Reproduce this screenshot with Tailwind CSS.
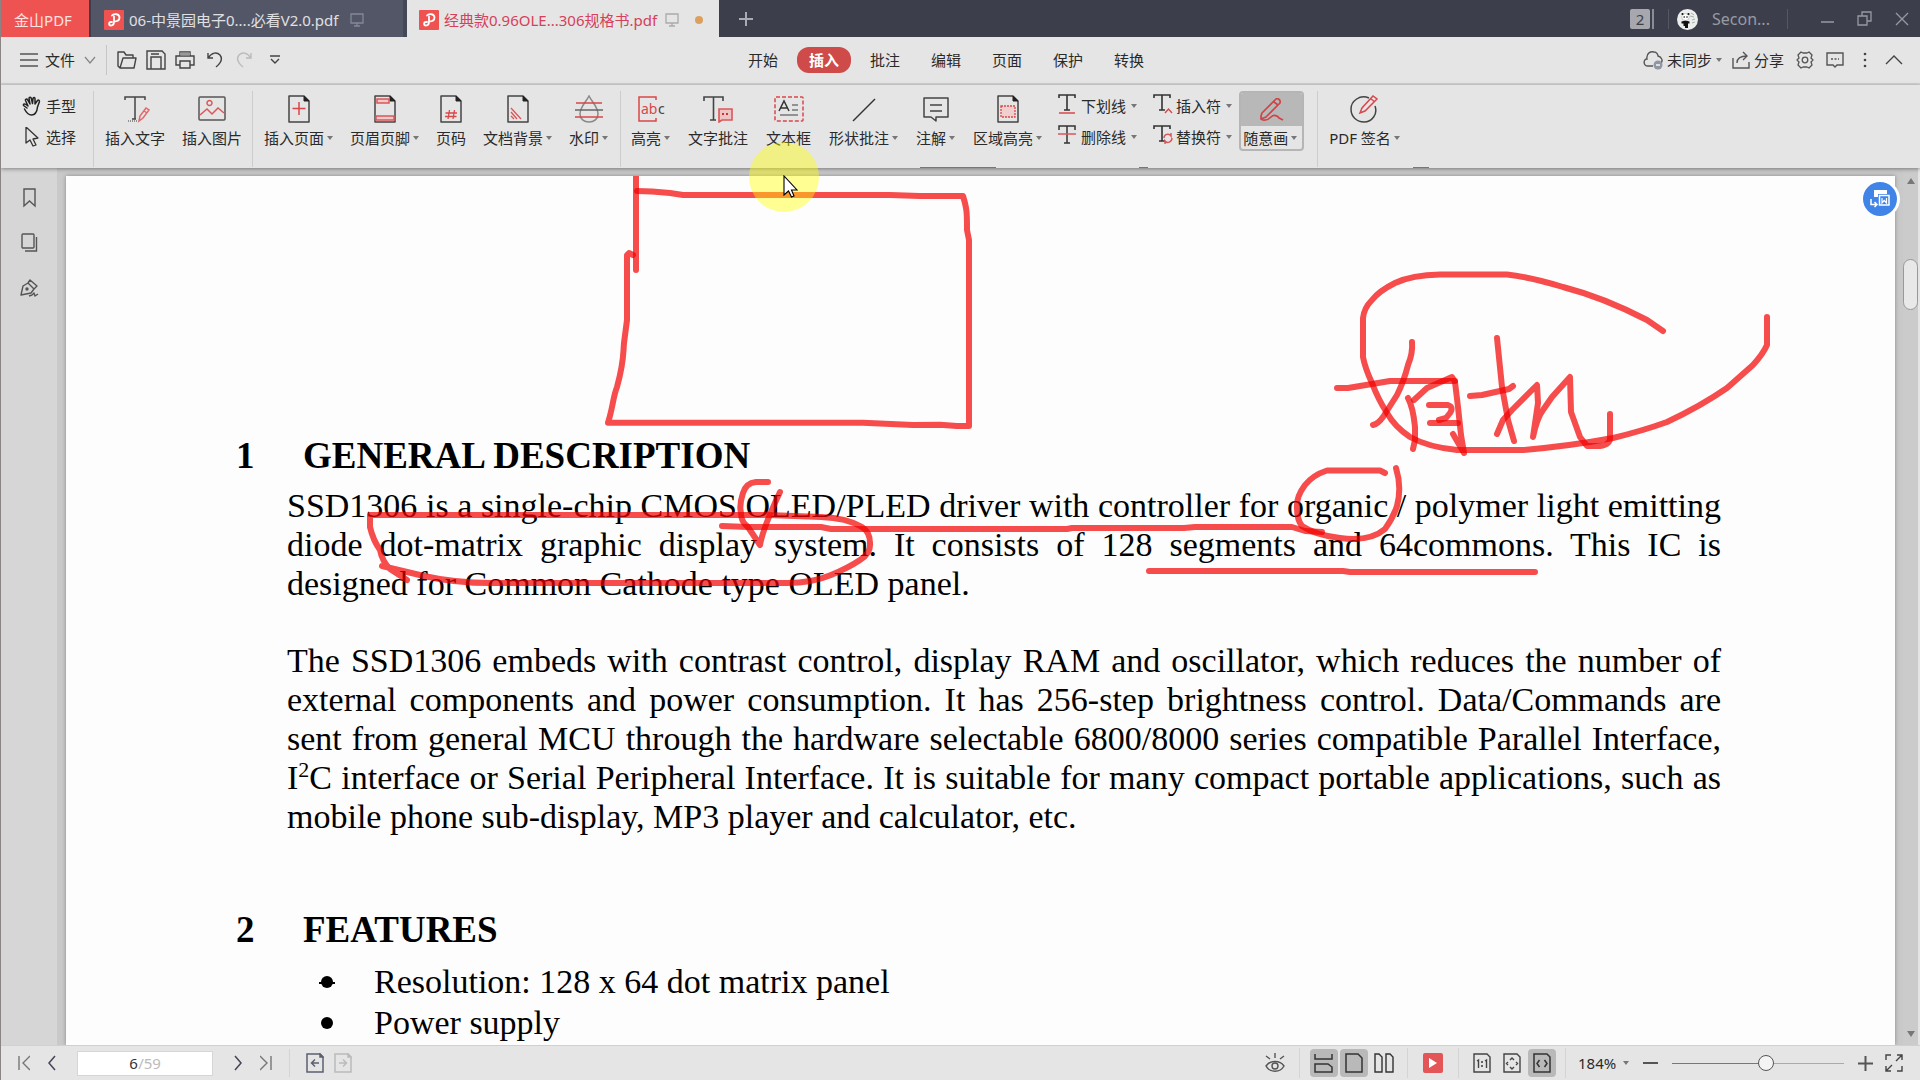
<!DOCTYPE html>
<html lang="zh-CN">
<head>
<meta charset="utf-8">
<title>金山PDF</title>
<script src="https://cdn.jsdelivr.net/npm/@tailwindcss/browser@4"></script>
</head>
<body class="font-['Noto_Sans','Noto_Sans_CJK_SC',sans-serif] text-[15px] leading-5 text-[#2a2a2a]">
<svg class="hidden" aria-hidden="true">
  <symbol id="page" viewBox="0 0 24 28"><path d="M2 1H17L22 6V27H2Z" fill="none" stroke="#444" stroke-width="1.5" stroke-linejoin="round"/><path d="M17 1V6H22Z" fill="#222" stroke="#222"/></symbol>
  <symbol id="tee" viewBox="0 0 20 20"><path d="M1 4V1H17V4M9 1V16M6 16H12" fill="none" stroke="#333" stroke-width="1.6"/></symbol>
  <symbol id="caret" viewBox="0 0 6 4"><path d="M0 0H6L3 4Z" fill="#777"/></symbol>
  <symbol id="pdf" viewBox="0 0 20 20"><rect width="20" height="20" rx="1" fill="#ef5351"/><path d="M8 5.500C10 3 15.500 4 15.500 7.500C15.500 11 12 11.500 10 11.500V6.500M10 11.500C10 13.500 9 15.500 7 15.500C4.500 15.500 4.500 12 7 12H8" fill="none" stroke="#fff" stroke-width="1.800" stroke-linecap="round"/></symbol>
  <symbol id="monitor" viewBox="0 0 14 14"><path d="M1 1H13V10H1ZM7 10V13M4 13H10" fill="none" stroke="currentColor" stroke-width="1.300"/></symbol>
</svg>

<div class="relative flex h-screen flex-col overflow-hidden border-l border-[#8a8584] bg-[#e5e5e5]">

  <!-- window tabs -->
  <header class="flex h-[37px] shrink-0 bg-[#3c3f4b]">
    <button class="w-[88px] bg-[#ef5351] pr-1 pt-0.5 text-[#ffe3e0]">金山PDF</button>
    <button class="ml-0.5 flex w-[316px] items-center border-r-4 border-[#444755] bg-[#525666] pl-[13px] pt-0.5 text-[#e0e0e2]">
      <svg class="h-5 w-5"><use href="#pdf"/></svg><span class="ml-[5px] w-[221px] whitespace-nowrap text-left">06-中景园电子0....必看V2.0.pdf</span>
      <svg class="h-3.5 w-3.5 text-[#858895]"><use href="#monitor"/></svg>
    </button>
    <button class="flex w-[312px] items-center bg-[#e5e5e5] pl-3 pt-0.5 text-[#d5405a]">
      <svg class="h-5 w-5"><use href="#pdf"/></svg><span class="ml-[5px] w-[221px] whitespace-nowrap text-left">经典款0.96OLE...306规格书.pdf</span>
      <svg class="h-3.5 w-3.5 text-[#aaa]"><use href="#monitor"/></svg>
      <span class="ml-4 h-2 w-2 rounded-full bg-[#dba060]"></span>
    </button>
    <button class="w-[54px] pl-5" aria-label="新建标签"><svg class="h-3.5 w-3.5" viewBox="0 0 14 14"><path d="M7 0V14M0 7H14" stroke="#a9abb3" stroke-width="2"/></svg></button>
    <div class="ml-auto flex items-center text-[#989aa3]">
      <button class="flex gap-0.5" aria-label="窗口数"><span class="h-5 w-5 rounded-xs bg-[#a6a8ae] text-center text-[#3c3f4b]">2</span><span class="w-0.5 bg-[#8b8d96]"></span></button>
      <span class="ml-3.5 h-5 w-px bg-[#555863]"></span>
      <svg class="ml-2 mt-0.5 h-[21px] w-[21px]" viewBox="0 0 21 21"><circle cx="10.500" cy="10.500" r="10.500" fill="#eceeec"/><ellipse cx="8.500" cy="8" rx="3.800" ry="3.500" fill="#fff" stroke="#999" stroke-width=".5"/><circle cx="5.500" cy="5" r="1.100" fill="#111"/><circle cx="11.500" cy="5" r="1.100" fill="#111"/><circle cx="7.200" cy="8" r=".8" fill="#111"/><circle cx="10" cy="8" r=".8" fill="#111"/><path d="M4.500 12.500C7 11.500 10 11.500 12.500 12.500V14.500H11V19H8V17H6.500V14.500H4.500Z" fill="#111"/><path d="M14 4l3 2M13 7l4 1M15 11l3-1M15 14l3-1" stroke="#a4b0ac" stroke-width="1"/></svg>
      <span class="ml-3.5 w-[64px] text-base">Secon...</span>
      <span class="ml-[11px] h-5 w-px bg-[#555863]"></span>
      <button class="ml-[33px]" aria-label="最小化"><svg class="h-4 w-[13px]" viewBox="0 0 13 16"><path d="M0 11H13" stroke="currentColor" stroke-width="1.500"/></svg></button>
      <button class="ml-[23px]" aria-label="还原"><svg class="h-4 w-4" viewBox="0 0 16 16"><path d="M1 5H10V14H1ZM5 5V1H14V10H10" fill="none" stroke="currentColor" stroke-width="1.300"/></svg></button>
      <button class="ml-[22px] mr-[11px]" aria-label="关闭"><svg class="h-3.5 w-3.5" viewBox="0 0 14 14"><path d="M1 1L13 13M13 1L1 13" stroke="currentColor" stroke-width="1.300"/></svg></button>
    </div>
  </header>

  <!-- menu row -->
  <nav class="flex h-[48px] shrink-0 items-center border-b-2 border-[#d3d3d3]">
    <div class="flex w-[735px] shrink-0 items-center pl-[19px]">
      <button class="flex items-center gap-[7px]"><svg class="h-4 w-[18px]" viewBox="0 0 18 16"><path d="M0 2H18M0 8H18M0 14H18" stroke="#555" stroke-width="1.400"/></svg>文件<svg class="ml-0.5 h-2 w-3" viewBox="0 0 12 8"><path d="M1 1L6 7L11 1" fill="none" stroke="#888" stroke-width="1.300"/></svg></button>
      <span class="ml-2.5 h-[30px] w-px bg-[#c6c6c6]"></span>
      <div class="ml-2.5 flex items-center gap-[9px]">
        <button aria-label="打开"><svg class="h-5 w-5" viewBox="0 0 20 20" fill="none" stroke="#444" stroke-width="1.400" stroke-linejoin="round"><path d="M3 18L1 16V2H7L9 5H16V8M3 18L6 8H19L17 18Z"/></svg></button>
        <button aria-label="保存"><svg class="h-5 w-5" viewBox="0 0 20 20" fill="none" stroke="#444" stroke-width="1.400"><path d="M1 1H16L19 4V19H1ZM5 19V7H15V19M5 4H13"/></svg></button>
        <button aria-label="打印"><svg class="h-5 w-5" viewBox="0 0 20 20" fill="none" stroke="#444" stroke-width="1.400"><path d="M5 6V2H15V6M5 15H1V6H19V15H15M5 11H15V18H5Z"/><path d="M5 4H15" stroke="#999" stroke-width="3"/></svg></button>
        <button class="ml-[3px]" aria-label="撤销"><svg class="h-5 w-4" viewBox="0 0 16 20" fill="none" stroke="#444" stroke-width="1.400"><path d="M1 3V8H6M1 8C5 2 10 2 13 5C16 9 14 13 9 17"/></svg></button>
        <button class="ml-1" aria-label="重做"><svg class="h-5 w-4" viewBox="0 0 16 20" fill="none" stroke="#bbb" stroke-width="1.400"><path d="M15 3V8H10M15 8C11 2 6 2 3 5C0 9 2 13 7 17"/></svg></button>
        <button class="ml-2" aria-label="更多"><svg class="h-2.5 w-3" viewBox="0 0 12 10" fill="none" stroke="#444" stroke-width="1.400"><path d="M1 1H11M2 4L6 8L10 4"/></svg></button>
      </div>
    </div>
    <div class="flex gap-[7px]">
      <button class="h-[26px] w-[54px]">开始</button>
      <button class="h-[26px] w-[54px] rounded-xl bg-[#cf4b49] font-bold text-white">插入</button>
      <button class="h-[26px] w-[54px]">批注</button>
      <button class="h-[26px] w-[54px]">编辑</button>
      <button class="h-[26px] w-[54px]">页面</button>
      <button class="h-[26px] w-[54px]">保护</button>
      <button class="h-[26px] w-[54px]">转换</button>
    </div>
    <div class="ml-auto mr-[17px] flex items-center">
      <button class="flex items-center gap-1"><svg class="h-5 w-5" viewBox="0 0 20 20" fill="none" stroke="#555" stroke-width="1.400"><path d="M10 16H5C0 16 0 9 4 9C3 3 8 1 11 2C14 2 15 5 15 6C19 7 20 11 18 13"/><circle cx="15" cy="15" r="4.500" fill="#9096a3" stroke="none"/><path d="M13 15H17" stroke="#fff"/></svg>未同步<svg class="h-1 w-1.5"><use href="#caret"/></svg></button>
      <button class="ml-2.5 flex items-center gap-1"><svg class="h-5 w-[18px]" viewBox="0 0 18 20" fill="none" stroke="#555" stroke-width="1.400"><path d="M1 8V18H17V12M5 13C5 8 8 6 15 6M11 2L15 6L11 10"/></svg>分享</button>
      <button class="ml-3" aria-label="设置"><svg class="h-5 w-[18px]" viewBox="0 0 18 20" fill="none" stroke="#555" stroke-width="1.300" stroke-linejoin="round"><path d="M5 2L7 3H11L13 2L16 5L15 8L17 10L15 12L16 15L13 18L11 17H7L5 18L2 15L3 12L1 10L3 8L2 5Z"/><circle cx="9" cy="10" r="2.800"/></svg></button>
      <button class="ml-3" aria-label="反馈"><svg class="h-[18px] w-[18px]" viewBox="0 0 18 18" fill="none" stroke="#555" stroke-width="1.400"><path d="M1 2H17V14H11L9 16L7 14H1Z"/><path d="M5 8H13" stroke-dasharray="2 1.500"/></svg></button>
      <button class="ml-[19px]" aria-label="更多"><svg class="h-4 w-1" viewBox="0 0 4 16" fill="#444"><circle cx="2" cy="2" r="1.300"/><circle cx="2" cy="8" r="1.300"/><circle cx="2" cy="14" r="1.300"/></svg></button>
      <button class="ml-[18px]" aria-label="收起"><svg class="h-2.5 w-[18px]" viewBox="0 0 18 10"><path d="M1 9L9 1L17 9" fill="none" stroke="#444" stroke-width="1.400"/></svg></button>
    </div>
  </nav>

  <!-- ribbon -->
  <section class="relative z-10 flex h-[83px] shrink-0 bg-[#e5e5e5] pt-1.5 leading-5 shadow-[0_1px_4px_#0006]">
    <div class="flex w-[92px] flex-col gap-[11px] pl-[21px] pt-[5px]">
      <button class="flex items-center gap-1"><svg class="h-5 w-5" viewBox="0 0 20 20" fill="none" stroke="#222" stroke-width="1.500" stroke-linecap="round" stroke-linejoin="round"><path d="M5 12L1.500 9.500C1 8 2.500 7.500 4 8.500L6 10L3.500 4.500C3 3 5 2.500 5.700 4L8 8L7 2.500C7 1 9 .8 9.300 2.300L10.500 7.500L11 2.500C11.300 1 13.200 1.200 13 3L13 8L15.500 4.500C16.500 3.500 18 4.500 17.300 6L15.500 11C15 16 13 19 9.500 19C6 19 4 16 2.500 13"/></svg>手型</button>
      <button class="flex items-center gap-1"><svg class="h-5 w-5" viewBox="0 0 20 20" fill="none" stroke="#333" stroke-width="1.300" stroke-linejoin="round"><path d="M4 0V16L8 13L11 19L14 18L11 12L16 11Z"/></svg>选择</button>
    </div>
    <span class="h-[76px] w-px bg-[#cdcdcd]"></span>

    <div class="flex w-[158px] items-start gap-[17px] pl-[11px] pt-1">
      <button class="flex flex-col items-center gap-[5px]"><svg class="h-7 w-8" viewBox="0 0 32 28" fill="none" stroke="#444" stroke-width="1.500"><path d="M6 5V2H26V5M16 2V24M13 24H17"/><path d="M9 26H19" stroke-dasharray="1 1" stroke="#777"/><path d="M20 26L21 21L27 13L30 15L24 23ZM25 16L28 18" stroke="#e2686a"/></svg>插入文字</button>
      <button class="flex flex-col items-center gap-[5px]"><svg class="h-7 w-7" viewBox="0 0 28 28" fill="none" stroke="#555" stroke-width="1.500"><rect x="1" y="2" width="26" height="23" rx="1"/><path d="M2 20L9 14L14 19L20 13L26 18M14 8A2.500 2.500 0 1 1 9 8A2.500 2.500 0 1 1 14 8" stroke="#d9575a"/></svg>插入图片</button>
    </div>
    <span class="h-[76px] w-px bg-[#cdcdcd]"></span>

    <div class="flex w-[367px] items-start gap-[17px] pl-[11px] pt-1">
      <button class="flex flex-col items-center gap-[5px]"><svg class="h-7 w-6" viewBox="0 0 24 28"><use href="#page"/><path d="M12 7V20M5.500 13.500H18.500" stroke="#d9474a" stroke-width="1.500"/></svg><span class="flex items-center gap-[3px]">插入页面<svg class="h-1 w-1.5"><use href="#caret"/></svg></span></button>
      <button class="flex flex-col items-center gap-[5px]"><svg class="h-7 w-6" viewBox="0 0 24 28"><use href="#page"/><path d="M4 4H16V8H4ZM3 21H21V25H3Z" stroke="#d9575a" fill="#f0c9c9" stroke-width="1.500"/></svg><span class="flex items-center gap-[3px]">页眉页脚<svg class="h-1 w-1.5"><use href="#caret"/></svg></span></button>
      <button class="flex flex-col items-center gap-[5px]"><svg class="h-7 w-6" viewBox="0 0 24 28"><use href="#page"/><path d="M10.500 15L9 24M15.500 15L14 24M6.500 18H18M6 21.500H17.500" stroke="#d9474a" stroke-width="1.300"/></svg>页码</button>
      <button class="flex flex-col items-center gap-[5px]"><svg class="h-7 w-6" viewBox="0 0 24 28"><use href="#page"/><path d="M5 13L15 24M5 17L11 24M5 21L8 24" stroke="#d9575a" stroke-width="1.300"/></svg><span class="flex items-center gap-[3px]">文档背景<svg class="h-1 w-1.5"><use href="#caret"/></svg></span></button>
      <button class="flex flex-col items-center gap-[5px]"><svg class="h-7 w-7" viewBox="0 0 28 28" fill="none" stroke-width="1.500"><path d="M14 1C11 7 5 12 5 19C5 24 9 27 14 27C19 27 23 24 23 19C23 12 17 7 14 1Z" stroke="#888"/><path d="M1 8H27M0 22H28" stroke="#d9474a"/><path d="M0 15H28" stroke="#666"/></svg><span class="flex items-center gap-[3px]">水印<svg class="h-1 w-1.5"><use href="#caret"/></svg></span></button>
    </div>
    <span class="h-[76px] w-px bg-[#cdcdcd]"></span>

    <div class="flex items-start gap-[18px] pl-2.5 pt-1">
      <button class="flex flex-col items-center gap-[5px]"><svg class="h-7 w-7" viewBox="0 0 28 28"><path d="M19 5V2H2V26H19V23" fill="none" stroke="#d9474a" stroke-width="1.500"/><text x="4" y="19" font-size="14" fill="#d9474a">ab</text><text x="21" y="19" font-size="14" fill="#444">c</text></svg><span class="flex items-center gap-[3px]">高亮<svg class="h-1 w-1.5"><use href="#caret"/></svg></span></button>
      <button class="flex flex-col items-center gap-[5px]"><svg class="h-7 w-8" viewBox="0 0 32 28" fill="none" stroke="#444" stroke-width="1.600"><path d="M2 6V2H21V6M11.500 2V25M8 25H14"/><path d="M17 14H30V25H20L17 27Z" fill="#efc4c4" stroke="#d9575a"/><path d="M20 19H22M24 19H26" stroke="#c33" stroke-width="2"/></svg>文字批注</button>
      <button class="flex flex-col items-center gap-[5px]"><svg class="h-7 w-[30px]" viewBox="0 0 30 28" fill="none"><rect x="1" y="2" width="28" height="24" rx="1" stroke="#d9474a" stroke-width="1.500" stroke-dasharray="4 2"/><path d="M5 16L10 6L15 16M7 13H13" stroke="#333" stroke-width="1.500"/><path d="M18 10H24M18 15H24M6 20H24" stroke="#777" stroke-width="1.400"/></svg>文本框</button>
      <button class="flex flex-col items-center gap-[5px]"><svg class="h-7 w-7" viewBox="0 0 28 28"><path d="M3 26L25 4" stroke="#333" stroke-width="1.500"/></svg><span class="flex items-center gap-[3px]">形状批注<svg class="h-1 w-1.5"><use href="#caret"/></svg></span></button>
      <button class="flex flex-col items-center gap-[5px]"><svg class="h-7 w-7" viewBox="0 0 28 28" fill="none" stroke="#444" stroke-width="1.500" stroke-linejoin="round"><path d="M2 3H26V22H14V26L9 22H2ZM8 10H20M8 16H20"/></svg><span class="flex items-center gap-[3px]">注解<svg class="h-1 w-1.5"><use href="#caret"/></svg></span></button>
      <button class="flex flex-col items-center gap-[5px]"><svg class="h-7 w-6" viewBox="0 0 24 28"><use href="#page"/><rect x="5" y="11" width="14" height="11" fill="#f0cfcf" stroke="#d9474a" stroke-width="1.300" stroke-dasharray="2 1"/></svg><span class="flex items-center gap-[3px]">区域高亮<svg class="h-1 w-1.5"><use href="#caret"/></svg></span></button>
    </div>

    <div class="ml-4 grid grid-cols-2 content-start gap-x-4 gap-y-[11px] pt-[5px]">
      <button class="flex items-center gap-[5px]"><svg class="-mt-1 h-5 w-[18px]" viewBox="0 0 18 20"><use href="#tee" width="20" height="20"/><path d="M1 19H17" stroke="#d9474a" stroke-width="1.500"/></svg>下划线<svg class="h-1 w-1.5"><use href="#caret"/></svg></button>
      <button class="flex items-center gap-[5px]"><svg class="-mt-1 h-5 w-[18px]" viewBox="0 0 18 20" overflow="visible"><use href="#tee" width="20" height="20"/><path d="M12 19L15.500 15L19 19" fill="none" stroke="#d9474a" stroke-width="1.400"/></svg>插入符<svg class="h-1 w-1.5"><use href="#caret"/></svg></button>
      <button class="flex items-center gap-[5px]"><svg class="-mt-1 h-5 w-[18px]" viewBox="0 0 18 20" fill="none" stroke="#333" stroke-width="1.500"><path d="M1 5V1H17V5M9 1V18M6 18H12"/><path d="M0 9H18" stroke="#d9575a"/></svg>删除线<svg class="h-1 w-1.5"><use href="#caret"/></svg></button>
      <button class="flex items-center gap-[5px]"><svg class="-mt-1 h-5 w-[18px]" viewBox="0 0 18 20" overflow="visible"><use href="#tee" width="20" height="20"/><path d="M11 13C11 9 16 8 18 11V8M19 13C19 17 14 19 12 16V19" fill="none" stroke="#d9575a" stroke-width="1.500"/></svg>替换符<svg class="h-1 w-1.5"><use href="#caret"/></svg></button>
    </div>

    <button class="ml-[7px] flex h-[60px] w-[65px] flex-col overflow-hidden rounded-sm border-2 border-[#b5b5b5] bg-[#e5e5e5]">
      <span class="flex h-[33px] w-full shrink-0 items-center justify-center bg-[#b8b8b8]"><svg class="h-6 w-6" viewBox="0 0 24 24" fill="none" stroke="#cf4547" stroke-width="1.700" stroke-linejoin="round"><path d="M1 18L2 15L16 1C18 0 21 2 20 5L6 19L1 21ZM14 4L18 7M1 21C4 23 8 22 11 19C14 16 18 18 19 20L23 22"/></svg></span>
      <span class="flex h-[23px] items-center gap-[3px] pl-0.5">随意画<svg class="h-1 w-1.5"><use href="#caret"/></svg></span>
    </button>
    <span class="ml-[13px] h-[76px] w-px bg-[#cdcdcd]"></span>
    <button class="ml-[11px] flex flex-col items-center gap-[5px] self-start pt-1"><svg class="h-7 w-7" viewBox="0 0 28 28" fill="none" stroke-width="1.500"><path d="M19 3C10 -1 1 6 1 14C1 22 7 27 14 27C22 27 28 19 25 11" stroke="#444"/><path d="M10 18L12 13L23 1L27 4L15 16ZM21 4L25 7" stroke="#d9474a"/></svg><span class="flex items-center gap-[3px]">PDF 签名<svg class="h-1 w-1.5"><use href="#caret"/></svg></span></button>

    <span class="absolute bottom-0 left-[919px] h-px w-[76px] bg-[#777]"></span>
    <span class="absolute bottom-0 left-[1138px] h-px w-[9px] bg-[#777]"></span>
    <span class="absolute bottom-0 left-[1412px] h-px w-4 bg-[#777]"></span>
  </section>

  <!-- workspace -->
  <main class="relative flex min-h-0 flex-1 border-r-2 border-[#e5e5e5] bg-[#c9c9c9]">
    <aside class="flex w-[56px] shrink-0 flex-col items-center gap-[25px] bg-[#d6d6d6] pt-5">
      <button aria-label="书签"><svg class="h-5 w-5" viewBox="0 0 20 20" fill="none" stroke="#555" stroke-width="1.400"><path d="M5 1H16V18L10.500 13L5 18Z"/></svg></button>
      <button aria-label="缩略图"><svg class="h-5 w-5" viewBox="0 0 20 20" fill="none" stroke="#555" stroke-width="1.400"><rect x="3" y="1" width="12" height="14" rx="1"/><path d="M17.500 4V18H6"/></svg></button>
      <button aria-label="签名"><svg class="h-5 w-5" viewBox="0 0 20 20" fill="none" stroke="#555" stroke-width="1.400" stroke-linejoin="round"><path d="M2 17L4 8L9 5L15 11L12 15ZM9 5L11 2L18 8L15 11M10 18L13 17L15 15L16 18L19 16"/><circle cx="8" cy="11" r="1" fill="#555"/></svg></button>
    </aside>

    <div class="relative ml-[9px] mt-2 min-w-0 flex-1 overflow-hidden bg-[#fdfdfd] shadow-[0_0_4px_#0005]">
      <article class="pl-[170px] pr-[174px] pt-[258px] font-['Liberation_Serif',serif] text-[34px] leading-[39px] text-black">
        <h2 class="flex text-[37px] font-bold leading-[44px]"><span class="w-[67px]">1</span>GENERAL DESCRIPTION</h2>
        <div class="ml-[51px] mt-2 whitespace-nowrap">
          <p class="[text-align-last:justify]">SSD1306 is a single-chip CMOS OLED/PLED driver with controller for organic / polymer light emitting</p>
          <p class="[text-align-last:justify]">diode dot-matrix graphic display system. It consists of 128 segments and 64commons. This IC is</p>
          <p>designed for Common Cathode type OLED panel.</p>
        </div>
        <div class="ml-[51px] mt-[38px] whitespace-nowrap">
          <p class="[text-align-last:justify]">The SSD1306 embeds with contrast control, display RAM and oscillator, which reduces the number of</p>
          <p class="[text-align-last:justify]">external components and power consumption. It has 256-step brightness control. Data/Commands are</p>
          <p class="[text-align-last:justify]">sent from general MCU through the hardware selectable 6800/8000 series compatible Parallel Interface,</p>
          <p class="[text-align-last:justify]">I<sup class="-top-3 text-[22px]">2</sup>C interface or Serial Peripheral Interface. It is suitable for many compact portable applications, such as</p>
          <p>mobile phone sub-display, MP3 player and calculator, etc.</p>
        </div>
        <h2 class="mt-[72px] flex text-[37px] font-bold leading-[44px]"><span class="w-[67px]">2</span>FEATURES</h2>
        <ul class="ml-[83px] mt-[9px] leading-[41px]">
          <li class="flex items-center"><svg class="mr-[39px] h-3.5 w-4" viewBox="0 0 16 14"><circle cx="8" cy="7" r="6"/><path d="M0 8H16" stroke="#000" stroke-width="2"/></svg>Resolution: 128 x 64 dot matrix panel</li>
          <li class="flex items-center"><svg class="mr-[39px] h-3.5 w-4" viewBox="0 0 16 14"><circle cx="8" cy="7" r="6"/></svg>Power supply</li>
        </ul>
      </article>

      <!-- freehand ink layer -->
      <svg class="absolute left-0 top-0 h-[869px] w-[1829px]" viewBox="66 176 1829 869" fill="none" stroke="#f20000" stroke-width="6" stroke-linecap="round" stroke-linejoin="round">
        <path opacity=".7" d="M636 170V270"/>
        <path opacity=".7" d="M637 191L652 191.500L670 193L683 195H890L920 196H963C967 209 967 213 967 230L969 240V426H957L940 424.700L913 425L863 422.700H608C613 407 613 397 617 387C624 362 623 355 624 343L627 320V255L629 253L633 255"/>
        <path opacity=".7" d="M1663 331L1647 320C1620 306 1590 294 1563 287Q1530 277 1507 274.500H1440Q1412 275 1395 283Q1379 291 1372 300Q1364 308 1363 318V357Q1365 368 1372 383Q1378 399 1387 413Q1395 427 1410 437Q1428 447 1457 450H1523Q1570 446 1613 438Q1642 431 1667 422Q1701 406 1727 388L1753 365Q1763 354 1767 345V317"/>
        <path opacity=".7" d="M1337 388H1348L1390 381H1455"/>
        <path opacity=".7" d="M1412 342Q1413 353 1408 365Q1404 381 1397 395L1383 417Q1378 424 1373 425"/>
        <path opacity=".7" d="M1408 398Q1413 407 1415 427V440L1413 449"/>
        <path opacity=".7" d="M1414 400L1427 388L1452 377L1455 382L1458 407L1461 435L1464 453L1453 434"/>
        <path opacity=".7" d="M1429 405H1448Q1454 407 1450 413L1446 418L1439 420"/>
        <path opacity=".7" d="M1430 423H1458"/>
        <path opacity=".7" d="M1470 396L1482 395L1509 389L1513 386"/>
        <path opacity=".7" d="M1497 338L1502 387L1508 420L1514 441"/>
        <path opacity=".7" d="M1497 434L1503 420L1512 410L1537 385L1538 403L1533 437Q1537 418 1543 410L1552 397L1570 377L1571 412L1580 437L1587 446H1600Q1611 445 1610 436V414"/>
        <path opacity=".7" d="M1385 473L1380 470.500H1327Q1313 475 1305 485Q1296 497 1297 508Q1297 520 1302 526Q1315 535 1340 538Q1370 542 1385 529Q1393 518 1397 506Q1402 487 1396 468"/>
        <path opacity=".7" d="M722 526L748 527H821L831 529H1067L1072 528H1184L1195 527H1292L1305 531L1322 532"/>
        <path opacity=".7" d="M768 482H756Q746 483 743 493Q739 505 741 513Q741 522 748 527L760 545Q763 528 780 492"/>
        <path opacity=".7" d="M382 566L424 576Q455 583 491 583H787Q812 583 831 575Q848 568 860 560Q871 553 870 543Q870 532 862 527Q847 518 821 517L768 515H370V527Q373 540 380 550Q382 561 390 569L407 580"/>
        <path opacity=".7" d="M1149 571H1343L1350 572H1535"/>
      </svg>
    </div>

    <div class="ml-2 flex w-[15px] shrink-0 flex-col items-center justify-between bg-[#cbcbcb] py-2">
      <svg class="mt-0.5 h-1.5 w-2" viewBox="0 0 8 6"><path d="M0 6H8L4 0Z" fill="#777"/></svg>
      <svg class="h-1.5 w-2" viewBox="0 0 8 6"><path d="M0 0H8L4 6Z" fill="#777"/></svg>
    </div>
    <span class="absolute right-0 top-[91px] h-[51px] w-[15px] rounded-lg border border-[#999] bg-[#e8e8e8]"></span>
  </main>

  <!-- status bar -->
  <footer class="relative flex h-[35px] shrink-0 items-center border-t border-[#d0d0d0] bg-[#e5e5e5]">
    <button class="ml-[17px]" aria-label="首页"><svg class="h-4 w-3" viewBox="0 0 12 16" fill="none" stroke="#777" stroke-width="1.400"><path d="M1 1V15M12 1L5 8L12 15"/></svg></button>
    <button class="ml-[18px]" aria-label="上一页"><svg class="h-4 w-2" viewBox="0 0 8 16" fill="none" stroke="#445" stroke-width="1.500"><path d="M7 1L1 8L7 15"/></svg></button>
    <label class="ml-[21px] flex h-[25px] w-[136px] items-center justify-center border border-[#d6d6d6] bg-white text-[#bbb]"><input class="w-[9px] bg-transparent p-0 text-[#333] outline-none" value="6" aria-label="页码">/59</label>
    <button class="ml-[21px]" aria-label="下一页"><svg class="h-4 w-2" viewBox="0 0 8 16" fill="none" stroke="#445" stroke-width="1.500"><path d="M1 1L7 8L1 15"/></svg></button>
    <button class="ml-[18px]" aria-label="末页"><svg class="h-4 w-3" viewBox="0 0 12 16" fill="none" stroke="#777" stroke-width="1.400"><path d="M11 1V15M0 1L7 8L0 15"/></svg></button>
    <span class="ml-[17px] h-7 w-px bg-[#d4d4d4]"></span>
    <button class="ml-4" aria-label="后退"><svg class="h-5 w-[18px]" viewBox="0 0 18 20" fill="none" stroke="#5b6070" stroke-width="1.500"><path d="M2 1H14L17 4V19H1V1ZM13 10H6M9 6.500L5.500 10L9 13.500"/><path d="M14 1V4H17Z" fill="#5b6070"/></svg></button>
    <button class="ml-2.5" aria-label="前进"><svg class="h-5 w-[18px]" viewBox="0 0 18 20" fill="none" stroke="#bbb" stroke-width="1.500"><path d="M2 1H14L17 4V19H1V1ZM5 10H12M9 6.500L12.500 10L9 13.500"/><path d="M14 1V4H17Z" fill="#bbb"/></svg></button>

    <div class="ml-auto flex items-center">
      <button aria-label="护眼模式"><svg class="h-5 w-5" viewBox="0 0 20 20" fill="none" stroke="#555" stroke-width="1.400"><path d="M1 13C5 7 15 7 19 13C15 20 5 20 1 13ZM10 0V5M1 3L5 6M19 3L15 6"/><circle cx="10" cy="13" r="3"/></svg></button>
      <span class="ml-3.5 h-[30px] w-px bg-[#d4d4d4]"></span>
      <button class="ml-2.5 flex h-7 w-7 items-center justify-center rounded-sm bg-[#b9b9b9]" aria-label="连续阅读"><svg class="h-5 w-5" viewBox="0 0 20 20" fill="none" stroke="#333" stroke-width="1.500"><path d="M1 1V6H18V1M1 19V11H14L18 14V19Z"/></svg></button>
      <button class="ml-0.5 flex h-7 w-7 items-center justify-center rounded-sm bg-[#b9b9b9]" aria-label="单页"><svg class="h-5 w-[18px]" viewBox="0 0 18 20" fill="none" stroke="#333" stroke-width="1.500"><path d="M1 1H13L17 5V19H1Z"/></svg></button>
      <button class="ml-1.5" aria-label="双页"><svg class="h-5 w-5" viewBox="0 0 20 20" fill="none" stroke="#333" stroke-width="1.400"><path d="M1 1H5L8 4V19H1ZM12 1H16L19 4V19H12Z"/></svg></button>
      <span class="ml-[13px] h-[30px] w-px bg-[#d4d4d4]"></span>
      <button class="ml-[15px] flex h-5 w-5 items-center justify-center rounded-xs bg-[#e35557]" aria-label="播放"><svg class="h-2.5 w-2" viewBox="0 0 8 10"><path d="M0 0L8 5L0 10Z" fill="#fff"/></svg></button>
      <span class="ml-[15px] h-[30px] w-px bg-[#d4d4d4]"></span>
      <button class="ml-3.5" aria-label="实际大小"><svg class="h-5 w-[18px]" viewBox="0 0 18 20" fill="none" stroke="#444" stroke-width="1.400"><path d="M1 1H14L17 4V19H1ZM4 8L5.500 7V15M12 8L13.500 7V15"/><path d="M9 8V10M9 12V14" stroke-width="1.600"/></svg></button>
      <button class="ml-3" aria-label="适合页面"><svg class="h-5 w-[18px]" viewBox="0 0 18 20" fill="none" stroke="#444" stroke-width="1.400"><path d="M1 1H14L17 4V19H1ZM7 7L9 5L11 7M7 14L9 16L11 14M5 9L3.500 10.500L5 12M13 9L14.500 10.500L13 12"/></svg></button>
      <button class="ml-[7px] flex h-7 w-7 items-center justify-center rounded-sm bg-[#b9b9b9]" aria-label="适合宽度"><svg class="h-5 w-[18px]" viewBox="0 0 18 20" fill="none" stroke="#333" stroke-width="1.500"><path d="M1 1H14L17 4V19H1ZM6.500 7L4 10.500L6.500 14M11.500 7L14 10.500L11.500 14"/></svg></button>
      <span class="ml-[9px] h-[30px] w-px bg-[#d4d4d4]"></span>
      <button class="ml-3 flex w-[51px] items-center justify-between">184%<svg class="h-1 w-1.5"><use href="#caret"/></svg></button>
      <button class="ml-3.5" aria-label="缩小"><svg class="h-4 w-[15px]" viewBox="0 0 15 16"><path d="M0 8H15" stroke="#555" stroke-width="2"/></svg></button>
      <input type="range" min="0" max="100" value="55" aria-label="缩放" class="ml-3.5 h-4 w-[172px] appearance-none bg-[linear-gradient(90deg,#777_55%,#aaa_55%)] bg-[length:100%_1px] bg-center bg-no-repeat [&::-webkit-slider-thumb]:h-4 [&::-webkit-slider-thumb]:w-4 [&::-webkit-slider-thumb]:appearance-none [&::-webkit-slider-thumb]:rounded-full [&::-webkit-slider-thumb]:border [&::-webkit-slider-thumb]:border-[#555] [&::-webkit-slider-thumb]:bg-[#f4f4f4]">
      <button class="ml-3.5" aria-label="放大"><svg class="h-[15px] w-[15px]" viewBox="0 0 15 15"><path d="M0 7.500H15M7.500 0V15" stroke="#555" stroke-width="2"/></svg></button>
      <button class="ml-3 mr-[17px]" aria-label="全屏"><svg class="h-[18px] w-[18px]" viewBox="0 0 18 18" fill="none" stroke="#444" stroke-width="1.400"><path d="M1 6V1H6M12 1H17V6M17 12V17H12M6 17H1V12M17 1L11 7M1 17L7 11"/></svg></button>
    </div>
  </footer>

  <!-- convert button and pointer highlight float above the page -->
  <button class="absolute right-[23px] top-[182px] z-10 flex h-[34px] w-[34px] items-center justify-center rounded-full bg-[#4084e8] shadow-[1px_0_0_2px_#fff]" aria-label="转换为Word"><svg class="h-[18px] w-5" viewBox="0 0 20 18" fill="none" stroke="#fff"><path d="M4 7V0H17V4H8V7Z" fill="#fff" stroke="none"/><path d="M9.500 5.500H19V15H9.500Z" stroke-width="1.500"/><path d="M12 8V13L14.200 10.500L16.500 13V8" stroke-width="1.200"/><path d="M1 9V14.500H6.500M4.500 12L7 14.500L4.500 17" stroke-width="1.500"/></svg></button>
  <span class="absolute left-[748px] top-[142px] z-20 h-[70px] w-[70px] rounded-full bg-[#ffff00]/42"></span>
  <svg class="absolute left-[782px] top-[175px] z-20 h-[23px] w-[15px]" viewBox="0 0 15 23"><path d="M1 1V20L5.500 16L8.500 22L11 21L8.500 15H14Z" fill="#fff" stroke="#000" stroke-width="1.100"/></svg>
</div>
</body>
</html>
